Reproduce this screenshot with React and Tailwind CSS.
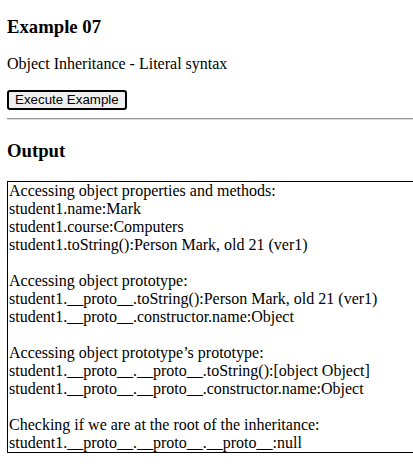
const lines = [
  "Accessing object properties and methods:",
  "student1.name:Mark",
  "student1.course:Computers",
  "student1.toString():Person Mark, old 21 (ver1)",
  "",
  "Accessing object prototype:",
  "student1.__proto__.toString():Person Mark, old 21 (ver1)",
  "student1.__proto__.constructor.name:Object",
  "",
  "Accessing object prototype\u2019s prototype:",
  "student1.__proto__.__proto__.toString():[object Object]",
  "student1.__proto__.__proto__.constructor.name:Object",
  "",
  "Checking if we are at the root of the inheritance:",
  "student1.__proto__.__proto__.__proto__:null",
];

const App = () => {
  return (
    <div className="w-[413px] h-[467px] overflow-hidden bg-white text-black font-['Liberation_Serif',_'Times_New_Roman',_serif]">
      <div className="w-[440px] pl-[7px] pt-[16px]">
        <h3 className="text-[18.72px] leading-[22px] font-bold">Example 07</h3>
        <p className="mt-[17px] text-[16px] leading-[18px]">
          Object Inheritance - Literal syntax
        </p>
        <button className="mt-[17px] block h-[20px] px-[6px] border-2 border-black rounded-[3px] bg-[#efefef] text-[13.33px] leading-[14px] font-['Liberation_Sans',_Arial,_sans-serif]">
          Execute Example
        </button>
        <hr className="mt-[8px] border-0 border-t border-b border-t-[#9a9a9a] border-b-[#dcdcdc]" />
        <h3 className="mt-[20px] text-[18.72px] leading-[22px] font-bold">Output</h3>
        <div className="mt-[19px] border border-black pl-px text-[16px] leading-[18px]">
          {lines.map((line, i) => (
            <div key={i} className="h-[18px] whitespace-nowrap">
              {line}
            </div>
          ))}
        </div>
      </div>
    </div>
  );
};

export default App;
